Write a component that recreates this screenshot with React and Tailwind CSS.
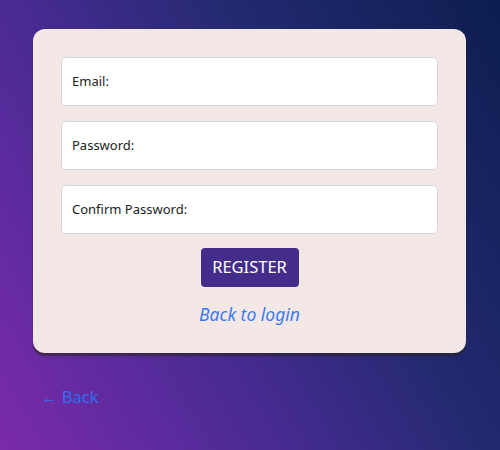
export default function App() {
  return (
    <div
      className="min-h-screen w-full bg-[linear-gradient(60deg,#7b2aaa_0%,#4a2b95_35%,#232a70_64%,#0c1e50_100%)] pt-[29px] px-[33px]"
      style={{ fontFamily: '"Noto Sans", "Open Sans", sans-serif' }}
    >
      <div className="w-[433px] rounded-[12px] bg-[#f3e8e6] shadow-[0_3px_2px_rgba(40,35,30,0.6)] px-[28px] pt-[28px] pb-[27px]">
        <div className="flex flex-col gap-[15px]">
          {["Email:", "Password:", "Confirm Password:"].map((t) => (
            <div
              key={t}
              className="h-[49px] rounded-[5px] border border-[#d6d6dc] bg-white flex items-center px-[10px] text-[13px] text-[#222]"
            >
              {t}
            </div>
          ))}
        </div>
        <div className="flex justify-center mt-[14px]">
          <button className="w-[98px] h-[39px] rounded-[4px] bg-[#432c8a] text-white text-[16.5px] flex items-center justify-center">
            REGISTER
          </button>
        </div>
        <div className="text-center mt-[15px] text-[17.5px] italic text-[#3b7bf0] leading-[24px]">
          Back to login
        </div>
      </div>
      <div className="mt-[32px] ml-[8px] text-[16.5px] text-[#2f6ef0]">← Back</div>
    </div>
  );
}
